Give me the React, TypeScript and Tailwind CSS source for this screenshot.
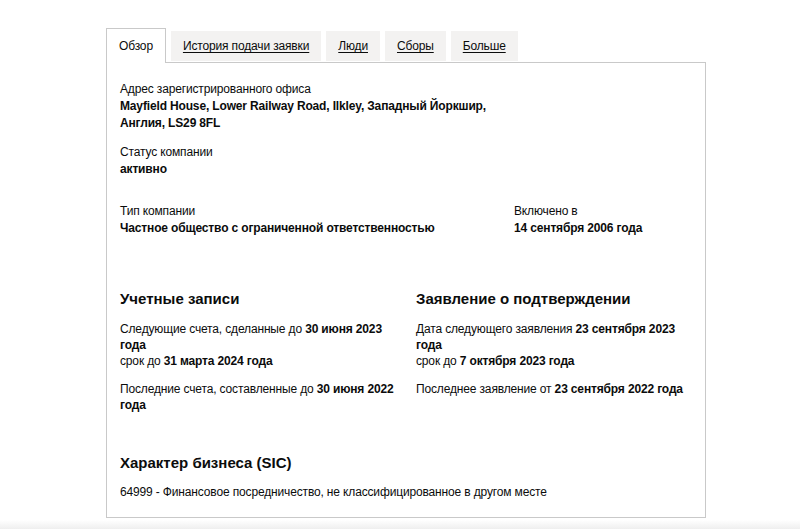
import React from 'react';

const tabs = ['История подачи заявки', 'Люди', 'Сборы', 'Больше'];

const Label = ({ children }: { children: React.ReactNode }) => (
  <dt className="text-[12px] leading-[18px] tracking-[-0.15px] text-[#0b0c0c]">{children}</dt>
);

const Value = ({ children }: { children: React.ReactNode }) => (
  <dd className="text-[12px] leading-[17px] font-bold tracking-[-0.15px] text-[#0b0c0c]">{children}</dd>
);

export default function App() {
  return (
    <div
      className="h-[529px] overflow-hidden bg-white pt-[28px] text-[#0b0c0c]"
      style={{ fontFamily: '"Liberation Sans", Arial, sans-serif' }}
    >
      <div className="pl-[106px]">
        {/* tabs */}
        <ul className="flex items-end text-[12px] tracking-[-0.15px]">
          <li className="relative z-10 -mb-px flex h-[35px] items-center border border-b-0 border-[#c9c9c9] bg-white px-[12px]">
            Обзор
          </li>
          {tabs.map(tab => (
            <li
              key={tab}
              className="mb-px ml-[5px] flex h-[30px] items-center bg-[#f3f2f1] px-[12px] underline underline-offset-2"
            >
              {tab}
            </li>
          ))}
        </ul>

        {/* panel */}
        <div className="h-[456px] w-[600px] border border-[#c9c9c9] px-[13px] pt-[17px]">
          <dl>
            <div className="w-[380px]">
              <Label>Адрес зарегистрированного офиса</Label>
              <Value>Mayfield House, Lower Railway Road, Ilkley, Западный Йоркшир, Англия, LS29 8FL</Value>
            </div>
            <div className="mt-[11px]">
              <Label>Статус компании</Label>
              <Value>активно</Value>
            </div>
            <div className="mt-[24px] grid grid-cols-[394px_1fr]">
              <div>
                <Label>Тип компании</Label>
                <Value>Частное общество с ограниченной ответственностью</Value>
              </div>
              <div>
                <Label>Включено в</Label>
                <Value>14 сентября 2006 года</Value>
              </div>
            </div>
          </dl>

          <div className="mt-[51px] grid grid-cols-[296px_1fr] text-[12px] leading-[16px] tracking-[-0.15px]">
            <div className="pr-[12px]">
              <h2 className="text-[15px] leading-[22px] font-bold tracking-normal">Учетные записи</h2>
              <p className="mt-[11px]">
                Следующие счета, сделанные до <strong>30 июня 2023 года</strong>
                <br />
                срок до <strong>31 марта 2024 года</strong>
              </p>
              <p className="mt-[12px]">
                Последние счета, составленные до <strong>30 июня 2022 года</strong>
              </p>
            </div>
            <div>
              <h2 className="text-[15px] leading-[22px] font-bold tracking-normal">Заявление о подтверждении</h2>
              <p className="mt-[11px]">
                Дата следующего заявления <strong>23 сентября 2023 года</strong>
                <br />
                срок до <strong>7 октября 2023 года</strong>
              </p>
              <p className="mt-[12px]">
                Последнее заявление от <strong>23 сентября 2022 года</strong>
              </p>
            </div>
          </div>

          <h2 className="mt-[39px] text-[15px] leading-[22px] font-bold">Характер бизнеса (SIC)</h2>
          <p className="mt-[10px] text-[12px] leading-[17px] tracking-[-0.15px]">
            64999 - Финансовое посредничество, не классифицированное в другом месте
          </p>
        </div>
      </div>
      <div className="mt-[2px] h-[10px] bg-gradient-to-b from-white to-[#ededed]" />
    </div>
  );
}
